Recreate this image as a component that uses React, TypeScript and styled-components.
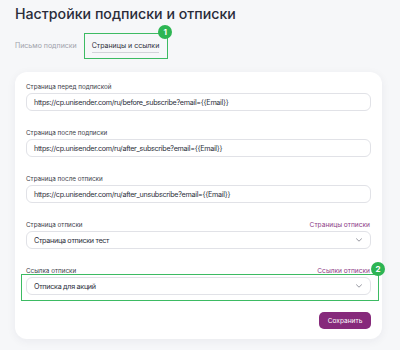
import React from "react";
import styled, { createGlobalStyle } from "styled-components";

const Global = createGlobalStyle`
  html, body { margin: 0; padding: 0; background: #f6f7f9; }
  body { font-family: Inter, "Noto Sans", sans-serif; color: #2c2e3a; }
  * { box-sizing: border-box; }
`;

const Page = styled.div`
  width: 400px;
  height: 350px;
  padding: 4px 18px 0 15px;
  overflow: hidden;
`;

const Title = styled.h1`
  margin: 0;
  font-size: 14.2px;
  line-height: 20px;
  font-weight: 500;
  color: #2a2c3a;
`;

const Tabs = styled.div`
  display: flex;
  align-items: center;
  gap: 7px;
  margin-top: 9px;
  height: 26px;
`;

const Tab = styled.div<{ $active?: boolean }>`
  font-size: 7px;
  line-height: 10px;
  color: ${(p) => (p.$active ? "#2c2e3a" : "#a0a2ab")};
  padding-bottom: ${(p) => (p.$active ? "1px" : "0")};
  border-bottom: ${(p) => (p.$active ? "1.5px solid #d2d3d9" : "none")};
  margin-top: ${(p) => (p.$active ? "2.5px" : "0")};
`;

const Highlight = styled.div`
  position: relative;
  border: 1.5px solid #3dbb63;
  padding: 0 8px 0 7px;
  height: 26px;
  display: flex;
  align-items: center;
`;

const Badge = styled.span<{ $top: number; $right: number }>`
  position: absolute;
  top: ${(p) => p.$top}px;
  right: ${(p) => p.$right}px;
  width: 14px;
  height: 14px;
  border-radius: 50%;
  background: #2db553;
  color: #fff;
  font-size: 8px;
  font-weight: 700;
  display: flex;
  align-items: center;
  justify-content: center;
  z-index: 2;
`;

const Card = styled.div`
  margin-top: 13px;
  background: #fff;
  border-radius: 12px;
  box-shadow: 0 2px 10px rgba(30, 40, 70, 0.06);
  padding: 10px 11px 10px 11px;
  display: flex;
  flex-direction: column;
  gap: 17px;
`;

const Field = styled.div`
  display: flex;
  flex-direction: column;
  gap: 1px;
  position: relative;
`;

const LabelRow = styled.div`
  display: flex;
  justify-content: space-between;
  align-items: center;
  height: 10px;
`;

const Label = styled.span`
  font-size: 6.3px;
  color: #3a3c48;
`;

const Link = styled.span`
  font-size: 6.6px;
  color: #8d3a86;
  padding-right: 1px;
`;

const Input = styled.div`
  height: 18px;
  border: 1px solid #e1e2e7;
  border-radius: 6px;
  padding: 0 7px;
  display: flex;
  align-items: center;
  justify-content: space-between;
  font-size: 7.2px;
  letter-spacing: -0.3px;
  color: #2c2e3a;
  background: #fff;
  position: relative;
  z-index: 1;
`;

const Chevron = styled.svg`
  width: 8px;
  height: 6px;
`;

const SelectFrame = styled.div`
  position: absolute;
  left: -5px;
  right: -8px;
  top: 8px;
  bottom: -6px;
  border: 1.5px solid #3dbb63;
`;

const Footer = styled.div`
  display: flex;
  justify-content: flex-end;
`;

const Button = styled.button`
  height: 17px;
  width: 52px;
  border: none;
  border-radius: 5px;
  background: #862a7b;
  color: #fff;
  font-family: Inter, sans-serif;
  font-size: 6.6px;
  padding: 0;
`;

const ChevronIcon = () => (
  <Chevron viewBox="0 0 8 6">
    <path d="M1.5 1.8 L4 4.2 L6.5 1.8" fill="none" stroke="#8a8c96" strokeWidth="0.9" strokeLinecap="round" strokeLinejoin="round" />
  </Chevron>
);

export default function App() {
  return (
    <>
      <Global />
      <Page>
        <Title>Настройки подписки и отписки</Title>
        <Tabs>
          <Tab>Письмо подписки</Tab>
          <Highlight>
            <Tab $active>Страницы и ссылки</Tab>
            <Badge $top={-9} $right={-5}>1</Badge>
          </Highlight>
        </Tabs>
        <Card>
          <Field>
            <LabelRow><Label>Страница перед подпиской</Label></LabelRow>
            <Input>https://cp.unisender.com/ru/before_subscribe?email={"{{Email}}"}</Input>
          </Field>
          <Field>
            <LabelRow><Label>Страница после подписки</Label></LabelRow>
            <Input>https://cp.unisender.com/ru/after_subscribe?email={"{{Email}}"}</Input>
          </Field>
          <Field>
            <LabelRow><Label>Страница после отписки</Label></LabelRow>
            <Input>https://cp.unisender.com/ru/after_unsubscribe?email={"{{Email}}"}</Input>
          </Field>
          <Field>
            <LabelRow><Label>Страница отписки</Label><Link>Страницы отписки</Link></LabelRow>
            <Input>Страница отписки тест<ChevronIcon /></Input>
          </Field>
          <Field>
            <LabelRow><Label>Ссылка отписки</Label><Link>Ссылки отписки</Link></LabelRow>
            <Input>Отписка для акций<ChevronIcon /></Input>
            <SelectFrame />
            <Badge $top={-4} $right={-14}>2</Badge>
          </Field>
          <Footer><Button>Сохранить</Button></Footer>
        </Card>
      </Page>
    </>
  );
}
